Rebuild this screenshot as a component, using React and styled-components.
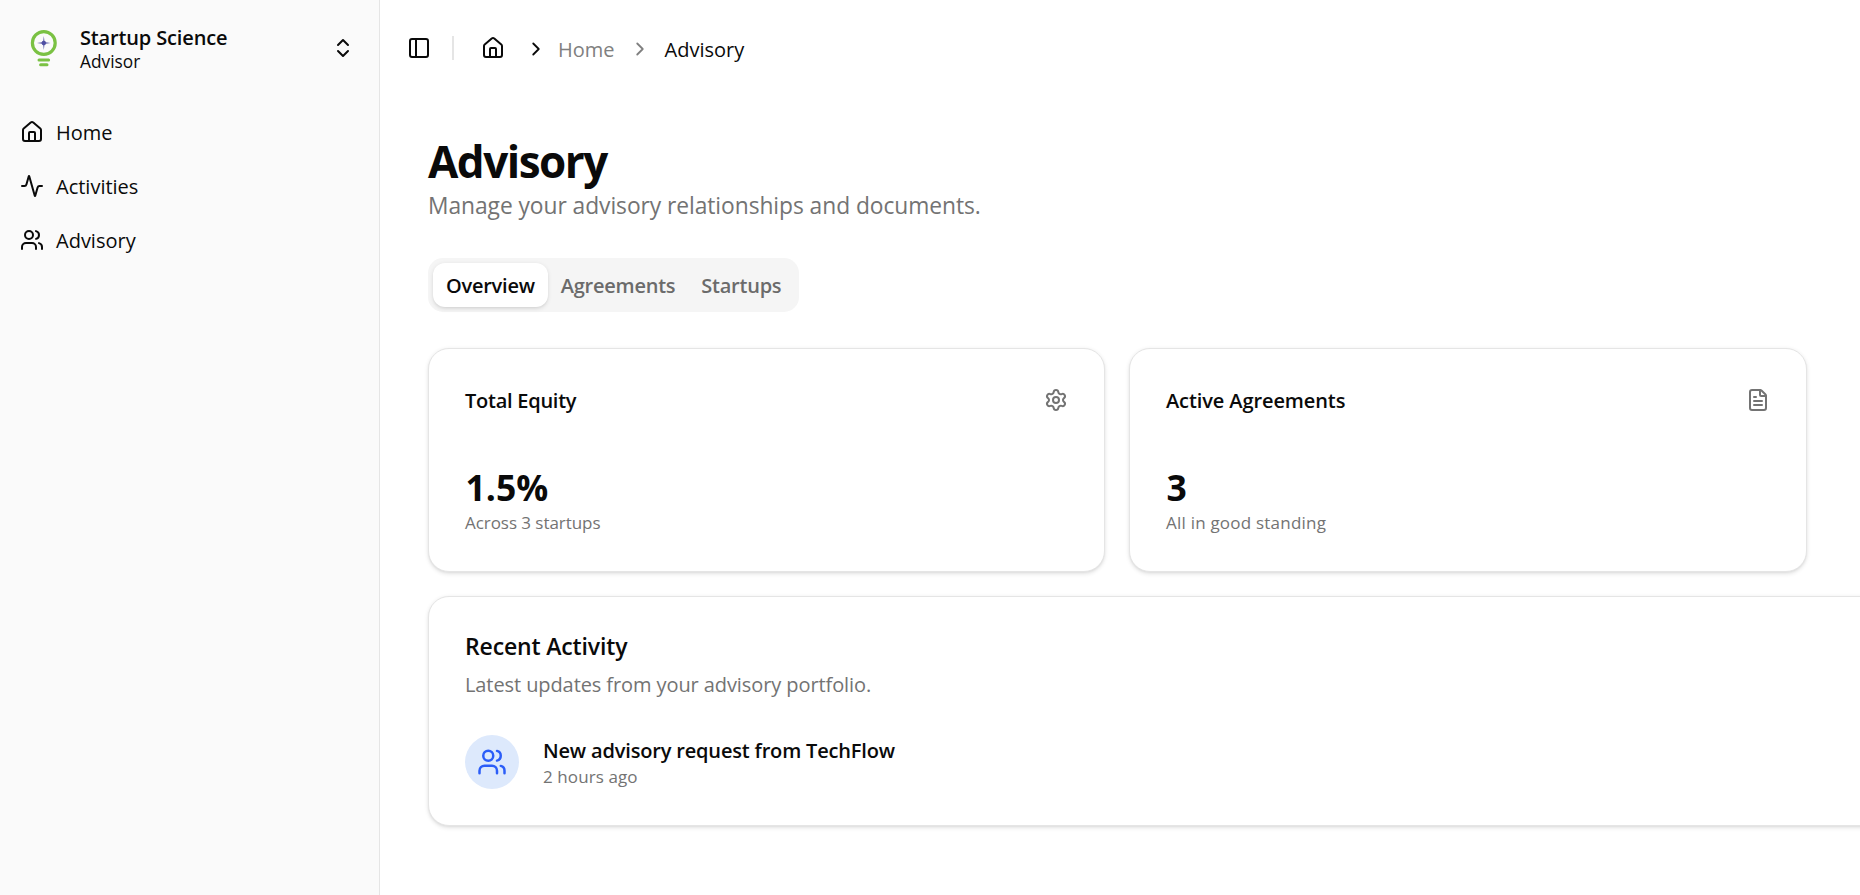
import React from 'react';
import styled, { createGlobalStyle } from 'styled-components';
import {
  Activity,
  ChevronRight,
  ChevronsUpDown,
  FileText,
  House,
  PanelLeft,
  Settings,
  Users,
} from 'lucide-react';

const GlobalStyle = createGlobalStyle`
  * {
    box-sizing: border-box;
  }

  body {
    margin: 0;
    overflow: hidden;
    background-color: white;
    color: #0a0a0a;
    font-family: 'Segoe UI', 'Open Sans', 'Noto Sans', sans-serif;
    font-size: 20px;
  }

  h1, h2, h3, p {
    margin: 0;
  }

  svg {
    display: block;
    flex-shrink: 0;
  }
`;

const Layout = styled.div`
  display: flex;
  height: 100vh;
  overflow: hidden;
`;

const Sidebar = styled.aside`
  width: 380px;
  flex-shrink: 0;
  background-color: #fafafa;
  border-right: 1px solid #e5e5e5;
`;

const TeamSwitcher = styled.div`
  display: flex;
  align-items: center;
  height: 97px;
  padding: 0 24px;
`;

const SwitcherArrows = styled(ChevronsUpDown)`
  margin-bottom: 1px;
`;

const TeamText = styled.div`
  flex: 1;
  padding-left: 16px;
`;

const TeamName = styled.div`
  font-weight: 600;
  line-height: 25px;
  letter-spacing: -0.15px;
`;

const TeamRole = styled.div`
  font-size: 17.3px;
  line-height: 23px;
`;

const Nav = styled.nav`
  padding: 8px 20px;
`;

const NavItem = styled.a`
  display: flex;
  align-items: center;
  gap: 12px;
  height: 54px;
`;

const NavLabel = styled.span`
  padding-top: 1px;
`;

const Content = styled.div`
  flex: 1;
  min-width: 0;
`;

const Topbar = styled.header`
  display: flex;
  align-items: center;
  height: 96px;
  padding-left: 27px;
`;

const Separator = styled.div`
  width: 2px;
  height: 24px;
  margin: 0 27px 0 21px;
  background-color: #e5e5e5;
`;

const Breadcrumb = styled.div`
  display: flex;
  align-items: center;
`;

const Crumb = styled.span`
  padding-top: 2px;
  color: ${props => (props.$current ? '#0a0a0a' : '#808080')};
`;

const CrumbArrow = styled(ChevronRight)`
  margin: 1px ${props => props.$after}px 0 ${props => props.$before}px;
  color: ${props => (props.$muted ? '#808080' : '#0a0a0a')};
`;

const Main = styled.main`
  width: 1427px;
  padding: 38px 0 0 48px;
`;

const PageTitle = styled.h1`
  font-size: 44px;
  font-weight: 700;
  line-height: 54px;
  letter-spacing: -1.5px;
`;

const PageLead = styled.p`
  padding-top: 1px;
  font-size: 22.8px;
  line-height: 34px;
  letter-spacing: -0.06px;
  color: #737373;
`;

const Tabs = styled.div`
  display: inline-flex;
  align-items: center;
  height: 54px;
  margin-top: 35px;
  padding: 0 5px;
  border-radius: 15px;
  background-color: #f5f5f5;
`;

const Tab = styled.button`
  height: 44px;
  padding: 1px 13px 0;
  border: none;
  border-radius: 12px;
  background-color: ${props => (props.$active ? 'white' : 'transparent')};
  box-shadow: ${props =>
    props.$active
      ? '0 1.5px 4.5px rgba(0, 0, 0, 0.1), 0 1.5px 3px -1.5px rgba(0, 0, 0, 0.1)'
      : 'none'};
  color: ${props => (props.$active ? '#0a0a0a' : '#6b6b6b')};
  font-family: inherit;
  font-size: 20px;
  font-weight: 600;
  letter-spacing: -0.24px;
`;

const Card = styled.section`
  border: 1px solid #e5e5e5;
  border-radius: 21px;
  background-color: white;
  box-shadow: 0 1.5px 4.5px rgba(0, 0, 0, 0.1),
    0 1.5px 3px -1.5px rgba(0, 0, 0, 0.1);
`;

const StatGrid = styled.div`
  display: grid;
  grid-template-columns: 677px 678px;
  gap: 24px;
  margin-top: 36px;
`;

const StatCard = styled(Card)`
  height: 224px;
  padding: 36px;
`;

const StatHeader = styled.div`
  display: flex;
  align-items: center;
  justify-content: space-between;
  height: 32px;

  svg {
    margin-bottom: 2px;
    color: #737373;
  }
`;

const StatTitle = styled.h3`
  font-size: 20px;
  font-weight: 600;
  line-height: 32px;
  letter-spacing: ${props => props.$tracking || 0}px;
`;

const StatValue = styled.div`
  margin-top: 47px;
  padding-left: 0.5px;
  font-size: 35.5px;
  font-weight: 700;
  line-height: 47px;
`;

const Note = styled.p`
  font-size: 17px;
  line-height: ${props => props.$line || 24}px;
  letter-spacing: ${props => props.$tracking || 0}px;
  color: #737373;
`;

/* runs off the right edge of the viewport */
const ActivityCard = styled(Card)`
  width: 1500px;
  height: 230px;
  margin-top: 24px;
  padding: 36px;
`;

const ActivityTitle = styled.h2`
  font-size: 23px;
  font-weight: 600;
  line-height: 26px;
  letter-spacing: -0.15px;
`;

const ActivityLead = styled.p`
  margin-top: 11px;
  line-height: 30px;
  letter-spacing: -0.09px;
  color: #737373;
`;

const ActivityRow = styled.div`
  display: flex;
  align-items: center;
  gap: 24px;
  margin-top: 35px;
`;

const ActivityIcon = styled.div`
  display: flex;
  align-items: center;
  justify-content: center;
  width: 54px;
  height: 54px;
  border-radius: 50%;
  background-color: #dde9fc;
  color: #2b5df8;
`;

const ActivityText = styled.div`
  padding-top: 2px;
`;

const ActivityName = styled.p`
  font-weight: 600;
  line-height: 28px;
  letter-spacing: -0.17px;
`;

const Logo = () => (
  <svg width="40" height="48" viewBox="0 0 40 48" fill="none">
    <circle cx="19.8" cy="18" r="11.4" stroke="#7ac143" strokeWidth="3.2" />
    <path
      d="M15 34.9h9.6M16.6 39.8h6.4"
      stroke="#7ac143"
      strokeWidth="3"
      strokeLinecap="round"
    />
    <path
      d="M19.8 11l.8 5.9 6 1.1-6 1.1-.8 5.9-.8-5.9-6-1.1 6-1.1z"
      fill="#6a6ab0"
    />
    <circle cx="19.8" cy="18" r="2.2" fill="#4f4fa3" />
  </svg>
);

const App = () => (
  <Layout>
    <GlobalStyle />
    <Sidebar>
      <TeamSwitcher>
        <Logo />
        <TeamText>
          <TeamName>Startup Science</TeamName>
          <TeamRole>Advisor</TeamRole>
        </TeamText>
        <SwitcherArrows size={24} />
      </TeamSwitcher>
      <Nav>
        <NavItem>
          <House size={24} />
          <NavLabel>Home</NavLabel>
        </NavItem>
        <NavItem>
          <Activity size={24} />
          <NavLabel>Activities</NavLabel>
        </NavItem>
        <NavItem>
          <Users size={24} />
          <NavLabel>Advisory</NavLabel>
        </NavItem>
      </Nav>
    </Sidebar>

    <Content>
      <Topbar>
        <PanelLeft size={24} />
        <Separator />
        <Breadcrumb>
          <House size={24} />
          <CrumbArrow size={22} $before={20} $after={11} />
          <Crumb>Home</Crumb>
          <CrumbArrow size={22} $before={14} $after={14} $muted />
          <Crumb $current>Advisory</Crumb>
        </Breadcrumb>
      </Topbar>

      <Main>
        <PageTitle>Advisory</PageTitle>
        <PageLead>Manage your advisory relationships and documents.</PageLead>

        <Tabs>
          <Tab $active>Overview</Tab>
          <Tab>Agreements</Tab>
          <Tab>Startups</Tab>
        </Tabs>

        <StatGrid>
          <StatCard>
            <StatHeader>
              <StatTitle $tracking={-0.25}>Total Equity</StatTitle>
              <Settings size={24} />
            </StatHeader>
            <StatValue>1.5%</StatValue>
            <Note $tracking={-0.05}>Across 3 startups</Note>
          </StatCard>
          <StatCard>
            <StatHeader>
              <StatTitle $tracking={-0.1}>Active Agreements</StatTitle>
              <FileText size={24} />
            </StatHeader>
            <StatValue>3</StatValue>
            <Note $tracking={0.22}>All in good standing</Note>
          </StatCard>
        </StatGrid>

        <ActivityCard>
          <ActivityTitle>Recent Activity</ActivityTitle>
          <ActivityLead>Latest updates from your advisory portfolio.</ActivityLead>
          <ActivityRow>
            <ActivityIcon>
              <Users size={30} />
            </ActivityIcon>
            <ActivityText>
              <ActivityName>New advisory request from TechFlow</ActivityName>
              <Note $tracking={0.1}>2 hours ago</Note>
            </ActivityText>
          </ActivityRow>
        </ActivityCard>
      </Main>
    </Content>
  </Layout>
);

export default App;
